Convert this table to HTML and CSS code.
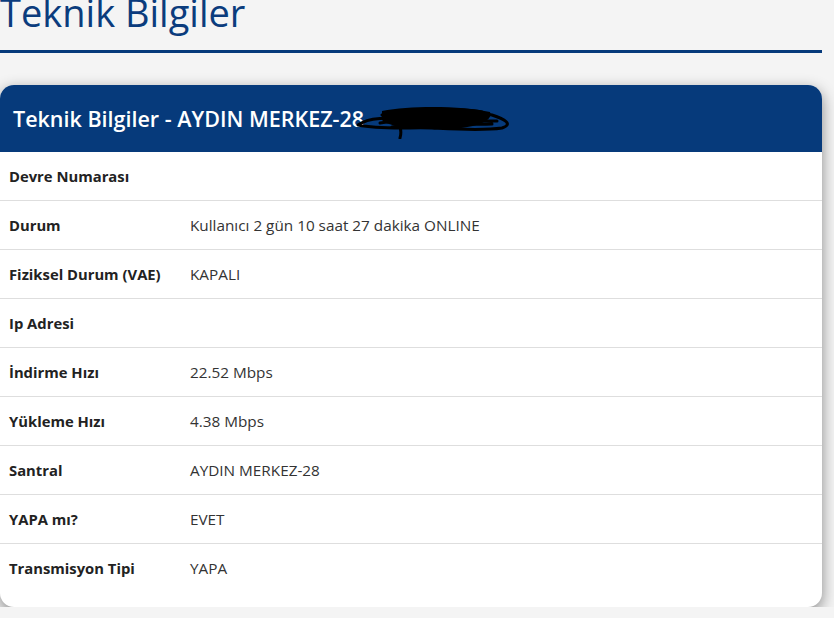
FILE: index.html
```html
<!DOCTYPE html>
<html lang="tr">
<head>
  <meta charset="UTF-8" />
  <meta name="viewport" content="width=device-width, initial-scale=1.0"/>
  <title>Teknik Bilgiler</title>
  <link rel="stylesheet" href="styles.css">
</head>
<body>
  <div class="page">
    <h1 class="page-title">Teknik Bilgiler</h1>

    <div class="card">
      <div class="card-header">
        <span>Teknik Bilgiler - AYDIN MERKEZ-28</span>
        <!-- karalama (gizlenen bilgi) -->
        <svg class="scribble" width="165" height="36" viewBox="0 0 165 36">
          <g fill="none" stroke="#000" stroke-width="3" stroke-linecap="round" stroke-linejoin="round">
            <path d="M6 22 C18 13 40 15 60 16 C90 10 120 8 140 12 C152 16 162 21 150 25 C130 28 100 26 80 25 C60 24 30 27 6 22 Z"/>
            <path d="M30 12 C60 6 100 5 130 9 M28 20 C60 16 110 18 145 18 M40 24 C70 20 110 22 140 21"/>
            <path d="M46 16 C49 24 50 29 48 35"/>
          </g>
          <path d="M30 8 C60 2 112 3 138 9 C142 18 122 26 92 26 C62 26 36 24 30 17 Z" fill="#000"/>
        </svg>
      </div>

      <table class="info">
        <tbody>
          <tr>
            <th>Devre Numarası</th>
            <td></td>
          </tr>
          <tr>
            <th>Durum</th>
            <td>Kullanıcı 2 gün 10 saat 27 dakika ONLINE</td>
          </tr>
          <tr>
            <th>Fiziksel Durum (VAE)</th>
            <td>KAPALI</td>
          </tr>
          <tr>
            <th>Ip Adresi</th>
            <td></td>
          </tr>
          <tr>
            <th>İndirme Hızı</th>
            <td>22.52 Mbps</td>
          </tr>
          <tr>
            <th>Yükleme Hızı</th>
            <td>4.38 Mbps</td>
          </tr>
          <tr>
            <th>Santral</th>
            <td>AYDIN MERKEZ-28</td>
          </tr>
          <tr>
            <th>YAPA mı?</th>
            <td>EVET</td>
          </tr>
          <tr>
            <th>Transmisyon Tipi</th>
            <td>YAPA</td>
          </tr>
        </tbody>
      </table>
    </div>
  </div>
</body>
</html>
```

FILE: styles.css
```css
* {
  box-sizing: border-box;
}

body {
  margin: 0;
  background-color: #f4f4f4;
  font-family: 'Open Sans', 'Noto Sans', sans-serif;
  color: #212529;
  overflow: hidden;
}

.page {
  width: 822px;
}

.page-title {
  margin: -10px 0 0;
  padding-bottom: 14px;
  font-size: 38px;
  font-weight: 400;
  line-height: 1.2;
  color: #0b3c7d;
  border-bottom: 3px solid #063a7b;
}

.card {
  margin-top: 32px;
  background-color: #fff;
  border-radius: 14px;
  padding-bottom: 14px;
  box-shadow: 0 5px 15px rgba(0, 0, 0, 0.45);
  overflow: hidden;
}

.card-header {
  display: flex;
  align-items: center;
  height: 67px;
  padding: 0 13px;
  background-color: #063a7b;
  color: #fff;
  font-size: 21.5px;
  font-weight: 600;
}

.scribble {
  margin-left: -12px;
  margin-top: 6px;
}

.info {
  width: 100%;
  border-collapse: collapse;
}

.info tr {
  height: 49px;
  border-bottom: 1px solid #dedede;
}

.info tr:last-child {
  border-bottom: none;
}

.info th,
.info td {
  padding: 0 9px;
  text-align: left;
}

.info th {
  width: 181px;
  font-size: 14.8px;
  font-weight: 700;
  color: #222;
}

.info td {
  font-size: 15.3px;
  font-weight: 400;
  color: #333;
}
```
